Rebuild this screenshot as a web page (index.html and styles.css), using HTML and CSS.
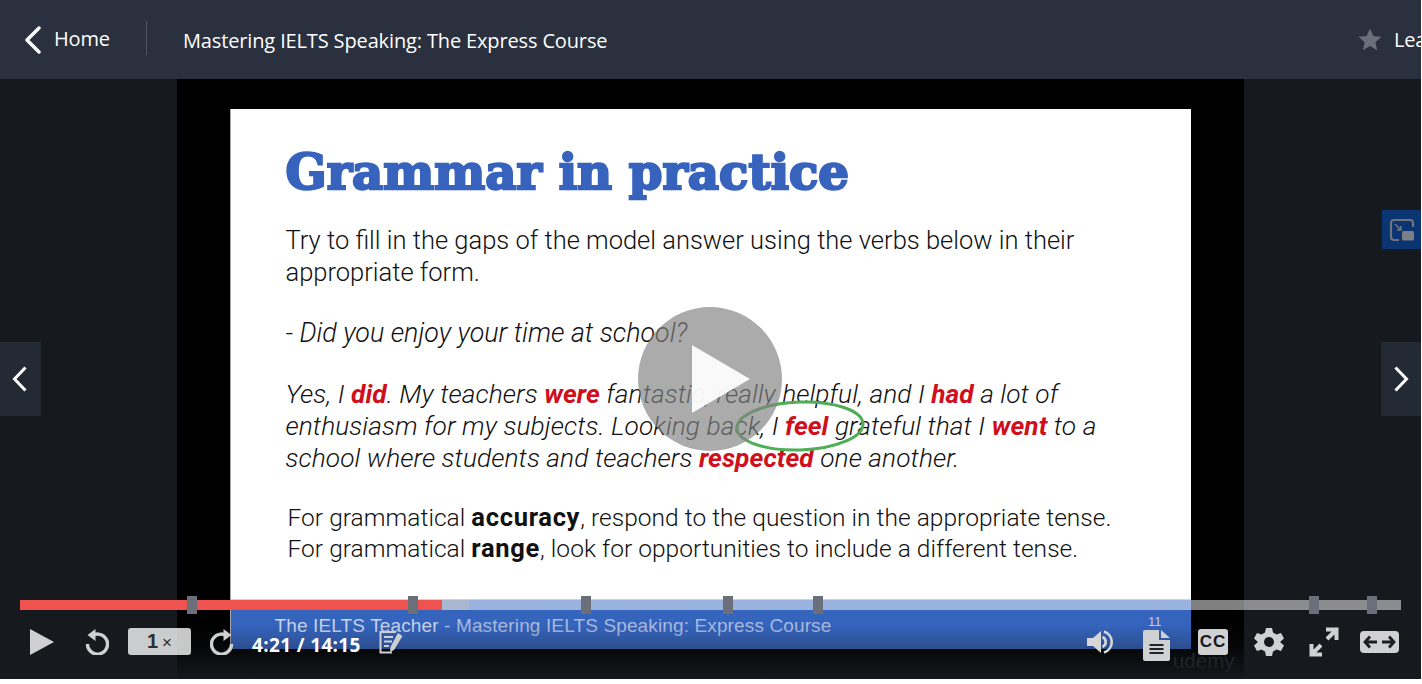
FILE: index.html
```html
<!DOCTYPE html>
<html lang="en">
<head>
    <meta charset="UTF-8">
    <meta name="viewport" content="width=device-width, initial-scale=1.0">
    <title>Mastering IELTS Speaking: The Express Course</title>
    <link rel="stylesheet" href="styles.css">
</head>
<body>
<div class="page">

    <header class="topbar">
        <a class="back" href="#">
            <svg width="18" height="28" viewBox="0 0 18 28"><path d="M15 2 L3 14 L15 26" fill="none" stroke="#fff" stroke-width="3.4" stroke-linecap="round" stroke-linejoin="round"/></svg>
            <span>Home</span>
        </a>
        <div class="divider"></div>
        <div class="course-title">Mastering IELTS Speaking: The Express Course</div>
        <div class="rating">
            <svg width="24" height="23" viewBox="0 0 24 23"><path d="M12 .5 L15.4 8 L23.4 8.8 L17.4 14.2 L19.1 22.2 L12 18.1 L4.9 22.2 L6.6 14.2 L.6 8.8 L8.6 8 Z" fill="#6a6f7a"/></svg>
            <span>Leave a rating</span>
        </div>
    </header>

    <main class="player">
        <div class="video">
            <div class="slide">
                <h1 class="slide-title">Grammar in practice</h1>
                <p class="slide-text">Try to fill in the gaps of the model answer using the verbs below in their appropriate form.</p>
                <p class="slide-text question"><em>- Did you enjoy your time at school?</em></p>
                <p class="slide-text answer"><em>Yes, I <b>did</b>. My teachers <b>were</b> fantastic, really helpful, and I <b>had</b> a lot of<br>enthusiasm for my subjects. Looking back, I <b>feel</b> grateful that I <b>went</b> to a<br>school where students and teachers <b>respected</b> one another.</em></p>
                <p class="slide-text note">For grammatical <strong>accuracy</strong>, respond to the question in the appropriate tense.<br>For grammatical <strong>range</strong>, look for opportunities to include a different tense.</p>
                <div class="slide-footer"><span class="author">The IELTS Teacher</span> - Mastering IELTS Speaking: Express Course</div>
            </div>
            <div class="watermark">udemy</div>
        </div>

        <svg class="circle-mark" width="134" height="58" viewBox="0 0 134 58"><ellipse cx="67" cy="29" rx="63" ry="24" transform="rotate(-2 67 29)" fill="none" stroke="#4fae55" stroke-width="3"/></svg>

        <div class="big-play">
            <svg width="62" height="70" viewBox="0 0 62 70"><path d="M2 1 L60 35 L2 69 Z" fill="#fff" fill-opacity=".92"/></svg>
        </div>

        <a class="side-nav prev" href="#">
            <svg width="16" height="26" viewBox="0 0 16 26"><path d="M13.5 1.5 L2.5 13 L13.5 24.500" fill="none" stroke="#fff" stroke-width="3"/></svg>
        </a>
        <a class="side-nav next" href="#">
            <svg width="16" height="26" viewBox="0 0 16 26"><path d="M2.500 1.500 L13.500 13 L2.500 24.500" fill="none" stroke="#fff" stroke-width="3"/></svg>
        </a>

        <div class="pip">
            <svg width="26" height="24" viewBox="0 0 26 24">
                <path d="M10 22 H5 Q2 22 2 19 V5 Q2 2 5 2 H21 Q24 2 24 5 V9" fill="none" stroke="#6f747c" stroke-width="2.200"/>
                <path d="M6 6 L12 12 M12 8 V12 H8" fill="none" stroke="#6f747c" stroke-width="1.600"/>
                <rect x="13" y="13" width="12" height="9.500" rx="1.500" fill="#7b7f86"/>
            </svg>
        </div>

        <div class="controls">
            <div class="progress">
                <div class="progress-played"></div>
                <div class="progress-buffered"></div>
                <span class="marker m1"></span>
                <span class="marker m2"></span>
                <span class="marker m3"></span>
                <span class="marker m4"></span>
                <span class="marker m5"></span>
                <span class="marker m6"></span>
                <span class="marker m7"></span>
            </div>
            <div class="control-row">
                <svg class="play" width="24" height="26" viewBox="0 0 24 26"><path d="M0 0 L24 13 L0 26 Z" fill="#cfd0d2"/></svg>
                <svg class="replay" width="24" height="27" viewBox="0 0 24 27"><path d="M6 8.500 A10 10 0 1 1 2.500 16" fill="none" stroke="#cfd0d2" stroke-width="3.400"/><path d="M10.500 1 V13 L2.500 7 Z" fill="#cfd0d2"/></svg>
                <div class="speed"><span>1</span><small>×</small></div>
                <svg class="forward" width="24" height="27" viewBox="0 0 24 27"><path d="M18 8.500 A10 10 0 1 0 21.500 16" fill="none" stroke="#cfd0d2" stroke-width="3.400"/><path d="M13.500 1 V13 L21.500 7 Z" fill="#cfd0d2"/></svg>
                <div class="time">4:21 / 14:15</div>
                <svg class="notes" width="24" height="24" viewBox="0 0 24 24"><path d="M17 2 H1.500 V22.500 H13" fill="none" stroke="#cfd0d2" stroke-width="2"/><path d="M5 7 H14 M5 11.500 H13 M5 16 H10" stroke="#cfd0d2" stroke-width="2"/><path d="M19 3 L23.500 6 L15 20 L11 22 L11.500 17 Z" fill="#cfd0d2"/></svg>

                <svg class="volume" width="28" height="26" viewBox="0 0 28 26"><path d="M0 9 H6 L14 2 V24 L6 17 H0 Z" fill="#d6d7d9"/><path d="M15.500 8 A5.500 5.500 0 0 1 15.500 18" fill="none" stroke="#d6d7d9" stroke-width="2.600"/><path d="M17 2.500 A11 11 0 0 1 17 23.500" fill="none" stroke="#d6d7d9" stroke-width="2.600"/></svg>
                <div class="transcript">
                    <span class="count">11</span>
                    <svg width="27" height="31" viewBox="0 0 27 31"><path d="M2 0 H16 V10 H27 V29 Q27 31 25 31 H2 Q0 31 0 29 V2 Q0 0 2 0 Z M18 0 L27 8 H18 Z" fill="#d0d1d3"/><path d="M6.500 15 H20.500 M6.500 19 H20.500 M6.500 23 H20.500" stroke="#22252b" stroke-width="2.200"/></svg>
                </div>
                <div class="cc">CC</div>
                <svg class="gear" width="30" height="30" viewBox="0 0 30 30"><path d="M12 1 H18 L19 5.500 L22.500 7.500 L27 6 L30 11.500 L26.500 14.500 V15.500 L30 18.500 L27 24 L22.500 22.500 L19 24.500 L18 29 H12 L11 24.500 L7.500 22.500 L3 24 L0 18.500 L3.500 15.500 V14.500 L0 11.500 L3 6 L7.500 7.500 L11 5.500 Z" fill="#d0d1d3"/><circle cx="15" cy="15" r="5" fill="#16191e"/></svg>
                <svg class="expand" width="30" height="30" viewBox="0 0 30 30"><path d="M17 2.500 H27.500 V13 M27 3 L18 12 M13 27.500 H2.500 V17 M3 27 L12 18" fill="none" stroke="#d0d1d3" stroke-width="4"/></svg>
                <svg class="theatre" width="39" height="22" viewBox="0 0 39 22"><rect width="39" height="22" rx="4" fill="#d0d1d3"/><path d="M5 11 H17 M10 5.500 L5 11 L10 16.500 M22 11 H34 M29 5.500 L34 11 L29 16.500" fill="none" stroke="#1c1f24" stroke-width="2.800"/></svg>
            </div>
        </div>
    </main>

</div>
</body>
</html>
```

FILE: styles.css
```css
body {
    margin: 0;
    background-color: #fff;
    font-family: "Open Sans", "Noto Sans", sans-serif;
    overflow: hidden;
}

.page {
    width: 1421px;
    height: 679px;
    overflow: hidden;
}

/* top bar */
.topbar {
    display: flex;
    align-items: center;
    height: 79px;
    background-color: #2a303d;
    color: #fff;
}

.back {
    display: flex;
    align-items: center;
    margin-left: 24px;
    width: 122px;
    color: #fff;
    font-size: 20px;
    letter-spacing: -0.2px;
    text-decoration: none;
}

.back span {
    margin-left: 12px;
    margin-top: -2px;
}

.divider {
    width: 1px;
    height: 34px;
    margin-top: -4px;
    background-color: #4d525c;
}

.course-title {
    margin-left: 36px;
    margin-top: 2px;
    font-size: 20px;
    letter-spacing: -0.14px;
    white-space: nowrap;
}

.rating {
    display: flex;
    align-items: center;
    gap: 12px;
    margin-left: auto;
    margin-right: -99px;
    font-size: 20px;
    letter-spacing: -0.3px;
    white-space: nowrap;
}

/* player */
.player {
    position: relative;
    display: flex;
    justify-content: center;
    height: 600px;
    background-color: #16191e;
    overflow: hidden;
}

.video {
    position: relative;
    width: 1067px;
    margin-left: -1px;
    padding: 30px 53px 0;
    box-sizing: border-box;
    background-color: #000;
}

.slide {
    position: relative;
    height: 540px;
    padding: 0 55px;
    box-sizing: border-box;
    background-color: #fff;
    color: #111;
    border-left: 1px solid #aaa;
    font-family: Roboto, "Liberation Sans", Arial, sans-serif;
    font-weight: 300;
}

.slide-title {
    margin: 0;
    padding-top: 29px;
    color: #3763bd;
    font-family: "DejaVu Serif", serif;
    font-size: 48.200px;
    font-weight: 700;
    line-height: 68px;
    -webkit-text-stroke: 2.400px #3763bd;
    white-space: nowrap;
}

.slide-text {
    margin: 0;
    font-size: 25.500px;
    line-height: 32px;
    width: 850px;
}

.slide-text:nth-of-type(1) {
    margin-top: 18px;
}

.question {
    margin-top: 29px;
    font-size: 26.800px;
}

.answer {
    margin-top: 29px;
    font-size: 26.300px;
    letter-spacing: 0.08px;
    width: 870px;
}

.answer b {
    color: #cf0f1c;
    font-weight: 700;
}

.note {
    margin-top: 28px;
    margin-left: 2px;
    font-size: 24.500px;
    line-height: 31px;
    letter-spacing: 0.04px;
}

.note strong {
    font-size: 25.500px;
    font-weight: 700;
    line-height: 20px;
    letter-spacing: 0.7px;
}

.slide-footer {
    position: absolute;
    left: 0;
    right: 0;
    bottom: 0;
    height: 50px;
    padding: 16px 0 0 44px;
    box-sizing: border-box;
    background-color: #3564bd;
    border-top: 1px solid #c9d4e6;
    color: #a9bbe0;
    font-family: "Liberation Sans", Arial, sans-serif;
    font-size: 19px;
    font-weight: 400;
    line-height: 20px;
    letter-spacing: 0.13px;
}

.author {
    color: #c9d3e8;
}

.watermark {
    position: absolute;
    right: 9px;
    bottom: 6px;
    color: #2f3136;
    font-family: "Liberation Sans", Arial, sans-serif;
    font-size: 20.500px;
}

.circle-mark {
    position: absolute;
    left: 733px;
    top: 318px;
}

.big-play {
    position: absolute;
    left: 638px;
    top: 228px;
    display: flex;
    align-items: center;
    justify-content: center;
    width: 144px;
    height: 144px;
    padding-left: 22px;
    box-sizing: border-box;
    border-radius: 50%;
    background-color: rgba(130, 130, 130, 0.67);
}

.side-nav {
    position: absolute;
    top: 263px;
    display: flex;
    align-items: center;
    justify-content: center;
    height: 74px;
    background-color: #242a33;
}

.prev {
    left: 0;
    width: 41px;
    padding-right: 1px;
    box-sizing: border-box;
}

.next {
    right: 0;
    width: 40px;
}

.pip {
    position: absolute;
    right: 0;
    top: 131px;
    display: flex;
    align-items: center;
    justify-content: center;
    width: 39px;
    height: 39px;
    background-color: #0b3473;
}

/* controls over the video */
.controls {
    position: absolute;
    left: 0;
    right: 0;
    bottom: 0;
    height: 83px;
    background: linear-gradient(rgba(22, 25, 30, 0) 35%, rgba(22, 25, 30, 0.3) 64%, rgba(22, 25, 30, 0.95) 100%);
}

.progress {
    position: relative;
    height: 10px;
    margin: 4px 20px 0;
    background-color: rgba(255, 255, 255, 0.5);
}

.progress-played {
    position: absolute;
    left: 0;
    top: 0;
    width: 422px;
    height: 10px;
    background-color: #ef5350;
}

.progress-buffered {
    position: absolute;
    left: 422px;
    top: 0;
    width: 27px;
    height: 10px;
    background-color: #a9b7d1;
}

.marker {
    position: absolute;
    top: -4px;
    width: 10px;
    height: 18px;
    background-color: #6a6f7a;
}

.m1 { left: 167px; }
.m2 { left: 388px; }
.m3 { left: 561px; }
.m4 { left: 703px; }
.m5 { left: 793px; }
.m6 { left: 1289px; }
.m7 { left: 1347px; }

.control-row {
    display: flex;
    align-items: center;
    height: 27px;
    margin-top: 18px;
    padding-left: 30px;
}

.replay {
    margin-left: 31px;
}

.speed {
    display: flex;
    align-items: baseline;
    justify-content: center;
    gap: 4px;
    width: 63px;
    height: 27px;
    margin-left: 19px;
    border-radius: 3px;
    background-color: rgba(255, 255, 255, 0.78);
    color: #2b2e33;
    font-family: "Liberation Sans", Arial, sans-serif;
    font-size: 20px;
    font-weight: 700;
    line-height: 27px;
}

.speed small {
    font-size: 17px;
    font-weight: 400;
}

.forward {
    margin-left: 19px;
}

.time {
    margin-left: 18px;
    margin-top: 6px;
    width: 108px;
    color: #fff;
    font-size: 19px;
    font-weight: 700;
    letter-spacing: 0.35px;
    white-space: nowrap;
}

.notes {
    margin-left: 19px;
}

.volume {
    margin-left: auto;
}

.transcript {
    position: relative;
    display: flex;
    margin-left: 28px;
    margin-top: 8px;
}

.count {
    position: absolute;
    left: 5px;
    top: -15px;
    color: #c3cee6;
    font-family: "Liberation Sans", Arial, sans-serif;
    font-size: 13px;
    line-height: 14px;
}

.cc {
    width: 30px;
    height: 26px;
    margin-left: 28px;
    border-radius: 3px;
    background-color: #d0d1d3;
    color: #17191d;
    font-family: "Liberation Sans", Arial, sans-serif;
    font-size: 17px;
    font-weight: 700;
    line-height: 26px;
    letter-spacing: 1px;
    text-align: center;
}

.gear {
    margin-left: 26px;
}

.expand {
    margin-left: 25px;
}

.theatre {
    margin-left: 21px;
    margin-right: 22px;
}
```
